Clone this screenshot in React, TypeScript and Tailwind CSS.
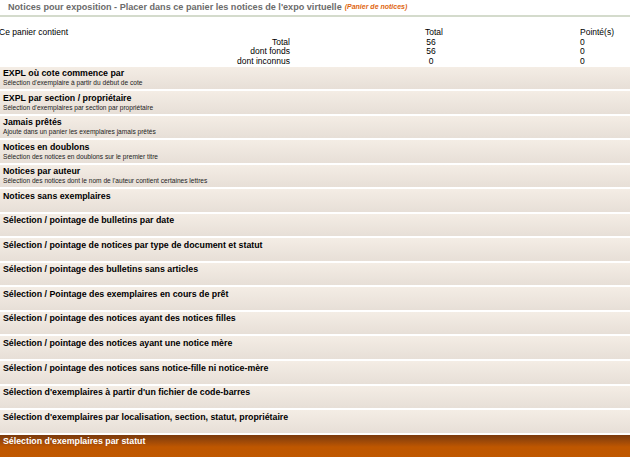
const rows: { title: string; desc?: string }[] = [
  { title: 'EXPL où cote commence par', desc: "Sélection d'exemplaire à partir du début de cote" },
  { title: 'EXPL par section / propriétaire', desc: "Sélection d'exemplaires par section par propriétaire" },
  { title: 'Jamais prêtés', desc: 'Ajoute dans un panier les exemplaires jamais prêtés' },
  { title: 'Notices en doublons', desc: 'Sélection des notices en doublons sur le premier titre' },
  { title: 'Notices par auteur', desc: "Sélection des notices dont le nom de l'auteur contient certaines lettres" },
  { title: 'Notices sans exemplaires' },
  { title: 'Sélection / pointage de bulletins par date' },
  { title: 'Sélection / pointage de notices par type de document et statut' },
  { title: 'Sélection / pointage des bulletins sans articles' },
  { title: 'Sélection / Pointage des exemplaires en cours de prêt' },
  { title: 'Sélection / pointage des notices ayant des notices filles' },
  { title: 'Sélection / pointage des notices ayant une notice mère' },
  { title: 'Sélection / pointage des notices sans notice-fille ni notice-mère' },
  { title: "Sélection d'exemplaires à partir d'un fichier de code-barres" },
  { title: "Sélection d'exemplaires par localisation, section, statut, propriétaire" },
];

const counts = [
  { label: 'Total', total: '56', pointe: '0' },
  { label: 'dont fonds', total: '56', pointe: '0' },
  { label: 'dont inconnus', total: '0', pointe: '0' },
];

export default function App() {
  return (
    <div className="h-[457px] w-[630px] overflow-hidden bg-white font-['Liberation_Sans',Arial,sans-serif] text-black">
      <div className="flex h-[17px] items-center gap-[3px] border-b-2 border-[#d4dbcc] pl-[8px]">
        <span className="whitespace-nowrap text-[9.1px] font-bold text-[#6b6b6b]">
          Notices pour exposition - Placer dans ce panier les notices de l'expo virtuelle
        </span>
        <span className="whitespace-nowrap text-[7px] font-bold italic text-[#e0650f]">(Panier de notices)</span>
      </div>

      <div className="pt-[11px] text-[8.5px] leading-[9.7px]">
        <div className="flex">
          <div className="-ml-[1px] w-[426px]">Ce panier contient</div>
          <div className="w-[155px]">Total</div>
          <div>Pointé(s)</div>
        </div>
        {counts.map((c) => (
          <div key={c.label} className="flex">
            <div className="w-[290px] text-right">{c.label}</div>
            <div className="w-[135px]" />
            <div className="w-[155px]">
              <div className="w-[12px] text-center">{c.total}</div>
            </div>
            <div>{c.pointe}</div>
          </div>
        ))}
      </div>

      <div className="flex flex-col gap-[2px]">
        {rows.map((r) => (
          <div
            key={r.title}
            className="h-[22.53px] bg-gradient-to-b from-[#f4ede5] to-[#e7dfd7] pl-[3px] pt-[1.5px]"
          >
            <div className="text-[8.8px] font-bold leading-[11px]">{r.title}</div>
            {r.desc && <div className="text-[6.6px] leading-[8px] text-[#222]">{r.desc}</div>}
          </div>
        ))}
        <div className="h-[30px] bg-gradient-to-b from-[#7a3a0c] via-[#bf5700] via-[40%] to-[#c05800] pl-[3px] pt-[1.5px]">
          <div className="text-[8.8px] font-bold leading-[11px] text-white">Sélection d'exemplaires par statut</div>
        </div>
      </div>
    </div>
  );
}
